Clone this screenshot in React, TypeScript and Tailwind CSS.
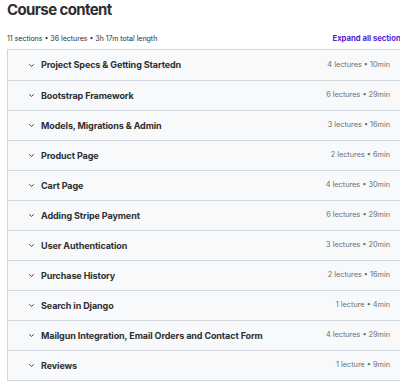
import React from "react";

const sections: [string, string][] = [
  ["Project Specs & Getting Startedn", "4 lectures • 10min"],
  ["Bootstrap Framework", "6 lectures • 29min"],
  ["Models, Migrations & Admin", "3 lectures • 16min"],
  ["Product Page", "2 lectures • 6min"],
  ["Cart Page", "4 lectures • 30min"],
  ["Adding Stripe Payment", "6 lectures • 29min"],
  ["User Authentication", "3 lectures • 20min"],
  ["Purchase History", "2 lectures • 16min"],
  ["Search in Django", "1 lecture • 4min"],
  ["Mailgun Integration, Email Orders and Contact Form", "4 lectures • 29min"],
  ["Reviews", "1 lecture • 9min"],
];

function Chevron() {
  return (
    <svg width="7" height="7" viewBox="0 0 8 8" className="shrink-0">
      <path d="M1.8 3 L4 5.1 L6.2 3" fill="none" stroke="#3e4143" strokeWidth="1.1" strokeLinecap="round" strokeLinejoin="round" />
    </svg>
  );
}

export default function App() {
  return (
    <div className="w-[400px] h-[382px] overflow-hidden bg-white text-[#2d2f31]" style={{ fontFamily: "Inter, 'Noto Sans', sans-serif" }}>
      <div className="pl-[7px] w-[420px]">
        <h2 className="text-[15px] font-bold leading-[20px] tracking-[-0.6px]">Course content</h2>
        <div className="flex items-center justify-between mt-[13px] h-[12px] pr-[15px]">
          <span className="text-[7px] text-[#2d2f31]">11 sections • 36 lectures • 3h 17m total length</span>
          <span className="text-[7.7px] font-bold text-[#5624d0]">Expand all sections</span>
        </div>
        <div className="mt-[4px] border border-[#d1d7dc] w-[410px]">
          {sections.map(([title, meta], i) => (
            <div
              key={i}
              className={`flex items-center h-[30px] bg-[#f7f9fa] pl-[20px] pr-[26px] ${i > 0 ? "border-t border-[#d1d7dc]" : ""}`}
            >
              <Chevron />
              <span className="ml-[6px] text-[9px] font-bold flex-1 tracking-[-0.1px]">{title}</span>
              <span className="text-[7.3px] text-[#6a6f73]">{meta}</span>
            </div>
          ))}
        </div>
      </div>
    </div>
  );
}
